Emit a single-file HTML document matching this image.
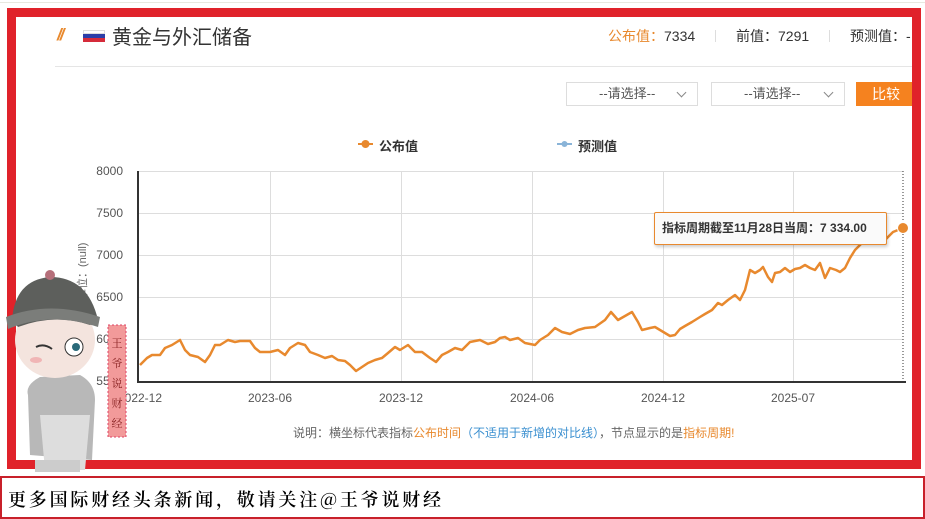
<!DOCTYPE html>
<html><head><meta charset="utf-8"><style>
*{margin:0;padding:0;box-sizing:border-box}
body{width:925px;height:519px;background:#fff;position:relative;overflow:hidden;font-family:"Liberation Sans","Noto Sans CJK SC",sans-serif;color:#333}
.abs{position:absolute}
.frame{left:7px;top:8px;width:914px;height:461px;border:9px solid #e0222a}
.sel{border:1px solid #ddd;height:24px;font-size:13px;color:#555;line-height:22px;padding-left:32px}
.sel:after{content:"";position:absolute;right:12px;top:6px;width:6px;height:6px;border-right:1px solid #888;border-bottom:1px solid #888;transform:rotate(45deg)}
</style></head><body>
<div class="abs" style="left:0;top:2px;width:925px;height:1px;background:#e8e8e0"></div>
<div class="abs frame"></div>
<div class="abs" style="left:57px;top:25px;font-size:17px;font-weight:bold;font-style:italic;color:#e8892e;letter-spacing:-2px">//</div>
<div class="abs" style="left:83px;top:30px;width:22px;height:4px;background:#fff;border:1px solid #ddd"></div>
<div class="abs" style="left:83px;top:34px;width:22px;height:4px;background:#2b3ea8"></div>
<div class="abs" style="left:83px;top:38px;width:22px;height:4px;background:#d52b3a"></div>
<div class="abs" style="left:112px;top:21px;font-size:20px;color:#333">黄金与外汇储备</div>
<div class="abs" style="left:608px;top:26px;font-size:14px;color:#e8892e">公布值：<span style="color:#333">7334</span></div>
<div class="abs" style="left:715px;top:30px;width:1px;height:12px;background:#ddd"></div>
<div class="abs" style="left:736px;top:26px;font-size:14px">前值：7291</div>
<div class="abs" style="left:829px;top:30px;width:1px;height:12px;background:#ddd"></div>
<div class="abs" style="left:850px;top:26px;font-size:14px;white-space:nowrap;width:62px;overflow:hidden">预测值：-</div>
<div class="abs" style="left:55px;top:66px;width:857px;height:1px;background:#e5e5e5"></div>
<div class="abs sel" style="left:566px;top:82px;width:132px">--请选择--</div>
<div class="abs sel" style="left:711px;top:82px;width:134px">--请选择--</div>
<div class="abs" style="left:856px;top:82px;width:56px;height:24px;background:#f5821f;color:#fff;font-size:14px;line-height:24px;padding-left:16px">比较</div>
<div class="abs" style="left:379px;top:136px;font-size:13px;font-weight:bold;color:#333">公布值</div>
<div class="abs" style="left:578px;top:136px;font-size:13px;font-weight:bold;color:#333">预测值</div>
<svg class="abs" style="left:0;top:0" width="925" height="519">
<line x1="358" y1="144" x2="373" y2="144" stroke="#e8892e" stroke-width="2"/><circle cx="365.5" cy="144" r="4" fill="#e8892e"/>
<line x1="557" y1="144" x2="572" y2="144" stroke="#8ab4d8" stroke-width="2"/><circle cx="564.5" cy="144" r="3" fill="#8ab4d8"/>
<g stroke="#ddd" stroke-width="1">
<line x1="138" y1="171.5" x2="903" y2="171.5"/><line x1="138" y1="213.5" x2="903" y2="213.5"/><line x1="138" y1="255.5" x2="903" y2="255.5"/><line x1="138" y1="297.5" x2="903" y2="297.5"/><line x1="138" y1="339.5" x2="903" y2="339.5"/>
<line x1="270.5" y1="171" x2="270.5" y2="382"/><line x1="401.5" y1="171" x2="401.5" y2="382"/><line x1="532.5" y1="171" x2="532.5" y2="382"/><line x1="663.5" y1="171" x2="663.5" y2="382"/><line x1="793.5" y1="171" x2="793.5" y2="382"/>
</g>
<line x1="903" y1="171" x2="903" y2="382" stroke="#333" stroke-dasharray="1,2"/>
<line x1="138" y1="171" x2="138" y2="383" stroke="#333" stroke-width="2"/>
<line x1="137" y1="382" x2="906" y2="382" stroke="#333" stroke-width="2"/>
<polyline fill="none" stroke="#e8892e" stroke-width="2.5" stroke-linejoin="round" points="140,365 147,358 152,355 160,355 165,348 172,345 180,340 185,350 190,355 198,357 205,362 210,355 215,345 220,345 228,340 235,342 240,341 250,341 255,348 260,352 270,352 278,350 285,355 290,348 298,343 305,345 310,352 318,355 325,358 332,356 338,360 345,361 350,365 356,371 362,367 368,363 375,360 382,358 388,353 395,347 400,350 408,345 415,352 422,352 430,358 436,362 442,355 448,352 455,348 462,350 470,342 480,340 488,344 495,342 500,338 505,337 510,340 518,338 525,343 535,345 540,340 548,335 555,328 562,332 570,334 578,330 585,328 595,327 605,320 611,312 618,320 625,316 632,312 638,322 642,330 650,328 655,327 660,330 665,333 670,336 675,335 680,329 685,326 692,322 700,317 705,314 712,310 718,303 722,305 728,300 735,295 740,300 745,290 750,270 755,273 760,270 763,267 768,277 772,282 775,273 780,272 785,268 790,272 795,269 800,268 805,265 810,268 815,270 820,263 825,278 830,268 836,270 840,272 845,268 850,258 855,250 862,243 870,235 880,235 885,240 893,232 903,228"/>
<circle cx="903" cy="228" r="5.5" fill="#e8892e" stroke="#fff" stroke-width="1"/>
<g font-size="12" fill="#555" text-anchor="end" font-family="Liberation Sans,sans-serif">
<text x="123" y="175">8000</text><text x="123" y="217">7500</text><text x="123" y="259">7000</text><text x="123" y="301">6500</text><text x="123" y="343">6000</text><text x="123" y="385">5500</text></g>
<g font-size="12" fill="#555" text-anchor="middle" font-family="Liberation Sans,sans-serif">
<text x="140" y="402">2022-12</text><text x="270" y="402">2023-06</text><text x="401" y="402">2023-12</text><text x="532" y="402">2024-06</text><text x="663" y="402">2024-12</text><text x="793" y="402">2025-07</text></g>
<text transform="translate(86,300) rotate(-90)" font-size="11" fill="#666">单位：(null)</text>
</svg>
<div class="abs" style="left:654px;top:212px;width:233px;height:33px;background:#fafafa;border:1px solid #e8892e;border-radius:2px;box-shadow:1px 2px 3px rgba(0,0,0,.2);font-size:12px;font-weight:bold;color:#333;line-height:31px;padding-left:7px">指标周期截至11月28日当周：7 334.00</div>
<div class="abs" style="left:293px;top:424px;font-size:12px;color:#666;white-space:nowrap">说明：横坐标代表指标<span style="color:#e8892e">公布时间</span><span style="color:#3a8fd0">（不适用于新增的对比线）</span>，节点显示的是<span style="color:#e8892e">指标周期</span><span style="color:#e8892e">!</span></div>
<svg class="abs" style="left:0;top:265px" width="135" height="210">
<path d="M30,190 L28,130 Q25,120 40,112 L80,110 Q95,118 95,135 L92,195 Z" fill="#b8b8b8"/>
<path d="M40,150 L45,205 L85,205 L90,150 Z" fill="#ddd"/>
<rect x="35" y="195" width="45" height="12" fill="#ccc"/>
<ellipse cx="55" cy="75" rx="40" ry="38" fill="#f4e4de"/>
<path d="M12,55 Q15,15 50,12 Q88,12 98,55 L90,60 Q55,48 18,62 Z" fill="#5d5f5c"/>
<path d="M6,52 Q50,35 100,52 L98,62 Q50,46 8,64 Z" fill="#7b7d7a"/>
<circle cx="50" cy="10" r="5" fill="#b56f7a"/>
<circle cx="74" cy="82" r="9" fill="#fff" stroke="#333"/><circle cx="76" cy="82" r="4" fill="#2a6a7a"/>
<path d="M36,82 Q44,78 52,84" stroke="#333" stroke-width="2" fill="none"/>
<ellipse cx="36" cy="95" rx="6" ry="3" fill="#f0b5b5"/>
<rect x="108" y="60" width="18" height="112" fill="#f29a9a"/>
<rect x="108" y="60" width="18" height="112" fill="none" stroke="#d46" stroke-dasharray="2,2"/>
<g font-size="11" fill="#822" text-anchor="middle" font-family="Noto Serif CJK SC,serif"><text x="117" y="82">王</text><text x="117" y="102">爷</text><text x="117" y="122">说</text><text x="117" y="142">财</text><text x="117" y="162">经</text></g>
</svg>
<div class="abs" style="left:0;top:476px;width:925px;height:43px;border:2px solid #c8202a"></div>
<div class="abs" style="left:8px;top:486px;font-size:18px;color:#000;font-weight:600;font-family:'Noto Serif CJK SC','Liberation Serif',serif;letter-spacing:2.8px">更多国际财经头条新闻，敬请关注@王爷说财经</div>
</body></html>
